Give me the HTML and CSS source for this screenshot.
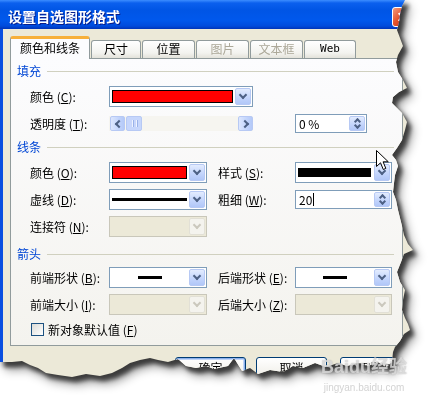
FILE: index.html
```html
<!DOCTYPE html>
<html lang="zh-CN">
<head>
    <meta charset="UTF-8">
    <title>设置自选图形格式</title>
    <link rel="stylesheet" href="styles.css">
</head>
<body>
    <div class="frame">
        <div class="window">
            <div class="titlebar">
                <span class="title">设置自选图形格式</span>
                <span class="close"></span>
            </div>
            <div class="client">
                <div class="tabs">
                    <div class="tab active w80">颜色和线条</div>
                    <div class="tab w50">尺寸</div>
                    <div class="tab w53">位置</div>
                    <div class="tab w53 off">图片</div>
                    <div class="tab w53 off">文本框</div>
                    <div class="tab w52 web">Web</div>
                </div>

                <div class="panel">
                    <div class="group-head">填充</div>
                    <div class="row first">
                        <span class="lbl">颜色 (<u>C</u>):</span>
                        <div class="combo w-wide">
                            <div class="val"><span class="swatch"></span></div>
                            <span class="drop"></span>
                        </div>
                    </div>
                    <div class="row second">
                        <span class="lbl">透明度 (<u>T</u>):</span>
                        <div class="scroll">
                            <span class="sbtn left"></span>
                            <span class="thumb"></span>
                            <span class="track"></span>
                            <span class="sbtn right"></span>
                        </div>
                        <div class="spin w-spin gap42">
                            <div class="val">0 %</div>
                            <div class="spin-btn"><span class="up"></span><span class="down"></span></div>
                        </div>
                    </div>

                    <div class="group-head sec">线条</div>
                    <div class="row first">
                        <span class="lbl">颜色 (<u>O</u>):</span>
                        <div class="combo w-mid">
                            <div class="val"><span class="swatch"></span></div>
                            <span class="drop"></span>
                        </div>
                        <span class="lbl right">样式 (<u>S</u>):</span>
                        <div class="combo w-right">
                            <div class="val"><span class="ln thick"></span></div>
                            <span class="drop"></span>
                        </div>
                    </div>
                    <div class="row">
                        <span class="lbl">虚线 (<u>D</u>):</span>
                        <div class="combo w-mid">
                            <div class="val"><span class="ln"></span></div>
                            <span class="drop"></span>
                        </div>
                        <span class="lbl right">粗细 (<u>W</u>):</span>
                        <div class="spin w-right">
                            <div class="val">20<span class="caret"></span></div>
                            <div class="spin-btn"><span class="up"></span><span class="down"></span></div>
                        </div>
                    </div>
                    <div class="row">
                        <span class="lbl">连接符 (<u>N</u>):</span>
                        <div class="combo w-mid disabled">
                            <div class="val"></div>
                            <span class="drop"></span>
                        </div>
                    </div>

                    <div class="group-head arrows">箭头</div>
                    <div class="row">
                        <span class="lbl">前端形状 (<u>B</u>):</span>
                        <div class="combo w-mid">
                            <div class="val"><span class="ln short"></span></div>
                            <span class="drop"></span>
                        </div>
                        <span class="lbl right">后端形状 (<u>E</u>):</span>
                        <div class="combo w-right">
                            <div class="val"><span class="ln short"></span></div>
                            <span class="drop"></span>
                        </div>
                    </div>
                    <div class="row">
                        <span class="lbl">前端大小 (<u>I</u>):</span>
                        <div class="combo w-mid disabled">
                            <div class="val"></div>
                            <span class="drop"></span>
                        </div>
                        <span class="lbl right">后端大小 (<u>Z</u>):</span>
                        <div class="combo w-right disabled">
                            <div class="val"></div>
                            <span class="drop"></span>
                        </div>
                    </div>
                    <label class="check">
                        <span class="box"></span>
                        <span>新对象默认值 (<u>F</u>)</span>
                    </label>
                </div>

                <div class="buttons">
                    <span class="btn default">确定</span>
                    <span class="btn">取消</span>
                    <span class="btn wide-gap">预览(<u>P</u>)</span>
                </div>
            </div>
        </div>
    </div>

    <!-- mouse pointer sitting over the dialog -->
    <svg class="cursor" width="14" height="21" viewBox="0 0 14 21">
        <path d="M0.5 0.5 L0.5 16.5 L4.5 12.8 L7.3 19.5 L9.8 18.4 L7.1 11.8 L12.3 11.8 Z" fill="#fff" stroke="#000" stroke-width="1"/>
    </svg>

    <div class="watermark">
        <div class="wm-logo">Baidu经验</div>
        <div class="wm-url">jingyan.baidu.com</div>
    </div>
</body>
</html>
```

FILE: styles.css
```css
* {
    margin: 0;
    padding: 0;
    box-sizing: border-box;
}

body {
    width: 436px;
    height: 404px;
    overflow: hidden;
    position: relative;
    background: #fff;
    font-family: "Noto Sans CJK SC", "DejaVu Sans", sans-serif;
    font-size: 12px;
    color: #000;
}

u {
    text-decoration: underline;
}

/* torn paper edge + shadow */
.frame {
    width: 416px;
    filter: drop-shadow(4px 5px 2px rgba(50, 50, 50, 0.9)) drop-shadow(2px 3px 4px rgba(0, 0, 0, 0.45));
}

.window {
    width: 416px;
    height: 392px;
    display: flex;
    flex-direction: column;
    background: #ECE9D8;
    clip-path: polygon(0 0, 405px 0, 402px 6px, 400px 14px, 399px 22px, 397px 30px, 400px 38px, 403px 46px, 398px 55px, 396px 62px, 398px 72px, 403px 80px, 407px 88px, 399px 92px, 393px 97px, 392px 103px, 397px 108px, 402px 113px, 407px 122px, 405px 130px, 402px 140px, 397px 148px, 392px 155px, 396px 160px, 398px 166px, 395px 175px, 394px 183px, 393px 192px, 396px 200px, 398px 210px, 400px 218px, 402px 226px, 404px 235px, 408px 244px, 413px 250px, 404px 254px, 401px 262px, 397px 272px, 400px 282px, 405px 290px, 403px 300px, 402px 310px, 405px 318px, 408px 324px, 410px 330px, 404px 334px, 400px 341px, 395px 347px, 393px 352px, 392px 362px, 386px 367px, 378px 362px, 368px 366px, 358px 363px, 347px 366px, 338px 363px, 326px 367px, 315px 363px, 303px 368px, 293px 366px, 283px 372px, 270px 370px, 258px 374px, 250px 368px, 242px 371px, 234px 358px, 228px 366px, 214px 369px, 206px 366px, 196px 368px, 186px 366px, 178px 359px, 168px 362px, 158px 360px, 150px 358px, 140px 360px, 130px 363px, 122px 368px, 112px 373px, 100px 376px, 86px 374px, 72px 377px, 58px 375px, 46px 373px, 38px 368px, 30px 365px, 22px 361px, 12px 362px, 0 362px);
}

/* title bar */
.titlebar {
    height: 29px;
    display: flex;
    align-items: center;
    padding: 3px 3px 0 8px;
    background: linear-gradient(180deg, #3C8DFF 0, #0B60EE 3px, #0055E5 10px, #0058EC 20px, #004BDC 26px, #0034B8 29px);
}

.title {
    color: #fff;
    font-weight: bold;
    font-size: 14px;
    line-height: 16px;
    text-shadow: 1px 1px 0 #0A1F8C;
}

.close {
    margin-left: auto;
    align-self: flex-end;
    margin-bottom: 2px;
    width: 21px;
    height: 20px;
    border: 1px solid #fff;
    border-radius: 3px;
    background: linear-gradient(135deg, #F09A7C, #E3512A 45%, #C83A14);
    position: relative;
}

.close::before,
.close::after {
    content: "";
    position: absolute;
    left: 4px;
    top: 8px;
    width: 11px;
    height: 2px;
    background: #fff;
    transform: rotate(45deg);
}

.close::after {
    transform: rotate(-45deg);
}

/* window body */
.client {
    flex: 1;
    border-left: 3px solid #0A4FE0;
    padding: 7px 0 0 7px;
}

.tabs {
    display: flex;
    align-items: flex-end;
    height: 22px;
    position: relative;
    z-index: 1;
}

.tab {
    height: 18px;
    margin-left: 1px;
    border: 1px solid #919B9C;
    border-bottom: none;
    border-radius: 3px 3px 0 0;
    background: linear-gradient(180deg, #FFFFFF, #F3F3EF 70%, #E3E2DA);
    text-align: center;
    line-height: 16px;
    white-space: nowrap;
}

.tab.active {
    height: 23px;
    margin-left: 0;
    margin-bottom: -1px;
    border-top: 3px solid #F7B03A;
    background: #FCFCFE;
    line-height: 17px;
}

.tab.off {
    color: #ACA899;
}

.tab.web {
    font-family: "DejaVu Sans Mono", monospace;
    font-size: 11px;
}

.w80 { width: 80px; }
.w50 { width: 50px; }
.w52 { width: 52px; }
.w53 { width: 53px; }

.panel {
    width: 393px;
    border: 1px solid #919B9C;
    background: linear-gradient(180deg, #FCFCFE, #F4F3EE);
    padding: 5px 8px 9px 6px;
}

.group-head {
    display: flex;
    align-items: center;
    height: 14px;
    line-height: 14px;
    color: #0046D5;
}

.group-head::after {
    content: "";
    flex: 1;
    height: 1px;
    margin-left: 6px;
    background: #D0D0BF;
}

.group-head.sec {
    margin-top: 7px;
}

.group-head.arrows {
    margin-top: 10px;
}

.row {
    display: flex;
    align-items: center;
    height: 21px;
    margin-top: 6px;
}

.row.first {
    margin-top: 8px;
}

.row.second {
    margin-top: 7px;
    height: 19px;
}

.lbl {
    width: 79px;
    margin-left: 13px;
    white-space: nowrap;
}

.lbl.right {
    width: 77px;
    margin-left: 11px;
}

/* combo boxes */
.combo {
    height: 21px;
    display: flex;
    align-items: center;
    padding: 1px;
    border: 1px solid #7F9DB9;
    background: #fff;
}

.w-wide { width: 144px; }
.w-mid { width: 98px; }
.w-right { width: 97px; }
.w-spin { width: 72px; }

.combo .val {
    flex: 1;
    height: 100%;
    display: flex;
    align-items: center;
    padding: 0 2px 0 1px;
}

.drop {
    width: 16px;
    height: 17px;
    display: flex;
    align-items: center;
    justify-content: center;
    border: 1px solid #B7C9F4;
    border-radius: 2px;
    background: linear-gradient(180deg, #E3ECFE, #C2D4FC 60%, #B1C7F8);
}

.drop::after {
    content: "";
    width: 4px;
    height: 4px;
    margin-top: -3px;
    border-right: 2px solid #4D6185;
    border-bottom: 2px solid #4D6185;
    transform: rotate(45deg);
}

.combo.disabled {
    border-color: #C9C7BA;
    background: #ECE9D8;
}

.combo.disabled .drop {
    border-color: #E2E0D6;
    background: #F4F3EE;
}

.combo.disabled .drop::after {
    border-color: #CBC8BD;
}

.swatch {
    flex: 1;
    height: 13px;
    background: #FF0000;
    border: 1px solid #000;
}

.ln {
    flex: 1;
    height: 3px;
    background: #000;
}

.ln.thick {
    height: 9px;
    margin-right: 1px;
}

.ln.short {
    flex: none;
    width: 24px;
    margin: 0 auto;
}

/* scrollbar */
.scroll {
    width: 144px;
    height: 15px;
    display: flex;
    background: #F6F5F0;
}

.sbtn,
.thumb {
    width: 15px;
    height: 15px;
    display: flex;
    align-items: center;
    justify-content: center;
    border: 1px solid #B7C9F4;
    border-radius: 2px;
    background: linear-gradient(90deg, #DDE7FE, #C2D4FC 60%, #B4C9F8);
}

.sbtn.left {
    margin-left: 1px;
}

.sbtn::after {
    content: "";
    width: 4px;
    height: 4px;
    border-left: 2px solid #4D6185;
    border-bottom: 2px solid #4D6185;
    transform: rotate(45deg);
    margin-left: 2px;
}

.sbtn.right::after {
    transform: rotate(-135deg);
    margin-left: -2px;
}

.thumb {
    width: 16px;
    margin-left: 1px;
    background: repeating-linear-gradient(90deg, #C8D6FB 0 2px, #EEF3FF 2px 3px, #9AB2EA 3px 4px);
    background-size: 8px 7px;
    background-position: center;
    background-repeat: no-repeat;
    background-color: #C6D6FC;
}

.track {
    flex: 1;
}

/* spin boxes */
.spin {
    height: 19px;
    display: flex;
    padding: 1px;
    border: 1px solid #7F9DB9;
    background: #fff;
}

.gap42 {
    margin-left: 42px;
}

.spin .val {
    flex: 1;
    padding-left: 2px;
    line-height: 15px;
    display: flex;
    align-items: center;
}

.caret {
    width: 1px;
    height: 13px;
    margin-left: 1px;
    background: #000;
}

.spin-btn {
    width: 16px;
    display: flex;
    flex-direction: column;
    border: 1px solid #B7C9F4;
    border-radius: 2px;
    background: linear-gradient(180deg, #E3ECFE, #C2D4FC 60%, #B1C7F8);
}

.spin-btn span {
    flex: 1;
    display: flex;
    align-items: center;
    justify-content: center;
}

.spin-btn span::after {
    content: "";
    width: 3px;
    height: 3px;
    border-left: 2px solid #4D6185;
    border-top: 2px solid #4D6185;
    transform: rotate(45deg);
    margin-top: 2px;
}

.spin-btn .down::after {
    transform: rotate(-135deg);
    margin-top: -3px;
}

/* checkbox */
.check {
    display: flex;
    align-items: center;
    height: 13px;
    margin: 8px 0 0 14px;
}

.check .box {
    width: 13px;
    height: 13px;
    margin-right: 4px;
    border: 1px solid #1C5180;
    background: linear-gradient(135deg, #DCDCD7, #FFFFFF);
}

/* dialog buttons */
.buttons {
    display: flex;
    margin-top: 11px;
    padding-left: 165px;
}

.btn {
    width: 71px;
    height: 23px;
    border: 1px solid #003C74;
    border-radius: 3px;
    background: linear-gradient(180deg, #FFFFFF, #F1F0EA 80%, #D6D0C5);
    text-align: center;
    line-height: 20px;
}

.btn + .btn {
    margin-left: 10px;
}

.btn.wide-gap {
    margin-left: 13px;
}

.btn.default {
    box-shadow: inset 0 0 0 1px #8CB0EC, inset 0 0 0 2px #C2D6F7;
}

/* overlays */
.cursor {
    position: absolute;
    left: 376px;
    top: 150px;
}

.watermark {
    position: absolute;
    left: 318px;
    top: 356px;
    width: 92px;
    text-align: center;
    font-family: "Liberation Sans", "Noto Sans CJK SC", sans-serif;
}

.wm-logo {
    font-size: 18px;
    font-weight: bold;
    line-height: 22px;
    color: rgba(255, 255, 255, 0.6);
    text-shadow: 0 0 1px rgba(120, 120, 120, 0.7);
}

.wm-url {
    margin-top: 4px;
    font-size: 10px;
    line-height: 12px;
    color: rgba(200, 200, 200, 0.8);
}
```
